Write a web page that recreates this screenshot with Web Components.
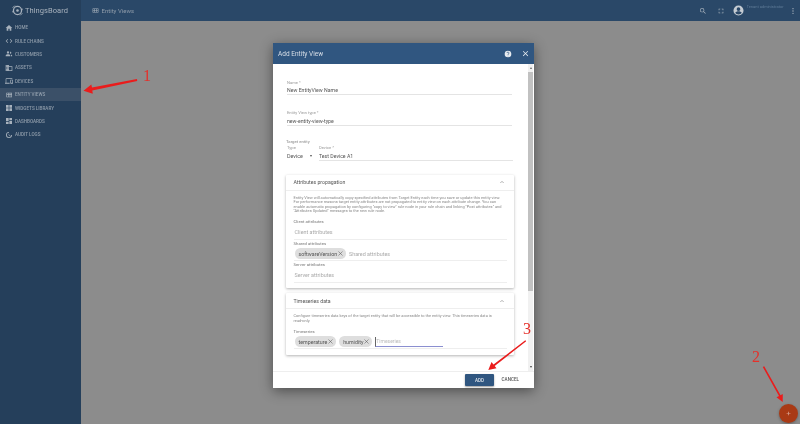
<!DOCTYPE html>
<html><head><meta charset="utf-8">
<style>
html,body{margin:0;height:100%;overflow:hidden;font-family:Roboto,"Liberation Sans",sans-serif;}
</style></head><body>
<tb-app></tb-app>
<template id="t-app"><style>
:host{display:grid;grid-template-columns:81px 1fr;grid-template-rows:21px 1fr;width:800px;height:424px;position:relative;background:#8c8c8c;overflow:hidden;filter:blur(.3px)}
tb-sidebar{grid-row:1/3}
</style>
<tb-sidebar></tb-sidebar><tb-topbar></tb-topbar><main></main>
<tb-dialog></tb-dialog><tb-fab></tb-fab><tb-notes></tb-notes></template>

<template id="t-side"><style>
:host{display:flex;flex-direction:column;background:#253f5b;color:#8f9caa;font-size:4.600px;font-weight:500}
.logo{height:21px;display:flex;align-items:center;gap:1px;padding-left:11px;font-size:7.500px;font-weight:400;color:#a8b2bd;letter-spacing:.05px}
.logo svg{width:13px;height:13px}
</style>
<div class="logo"><svg viewBox="0 0 24 24"><circle cx="12" cy="12" r="7.500" fill="none" stroke="#a8b2bd" stroke-width="2.400"/><path d="M8 16 16 8" stroke="#253f5b" stroke-width="2"/><path d="M3 7 7 3M17 21l4-4M2 14l2 1M20 9l2 1" stroke="#a8b2bd" stroke-width="1.600"/><circle cx="12" cy="12" r="2.400" fill="#a8b2bd"/></svg><span>ThingsBoard</span></div>
<tb-nav icon="M10 20v-6h4v6h5v-8h3L12 3 2 12h3v8z">HOME</tb-nav>
<tb-nav icon="M9.400 16.600 4.800 12l4.600-4.600L8 6l-6 6 6 6zM14.600 16.600l4.600-4.600-4.600-4.600L16 6l6 6-6 6z">RULE CHAINS</tb-nav>
<tb-nav icon="M9 11a3.500 3.500 0 1 0 0-7 3.500 3.500 0 0 0 0 7zM2 19v-2c0-2.500 4.500-4 7-4s7 1.500 7 4v2zM16 11a3 3 0 0 0 0-6c-.5 0-1 .1-1.400.3a5 5 0 0 1 0 5.400c.4.200.9.300 1.400.300zM18 13.300c1.500.8 3.500 1.800 3.500 3.700v2H18z">CUSTOMERS</tb-nav>
<tb-nav icon="M12 7V3H2v18h20V7zM6 19H4v-2h2zm0-4H4v-2h2zm0-4H4V9h2zm0-4H4V5h2zm4 12H8v-2h2zm0-4H8v-2h2zm0-4H8V9h2zm0-4H8V5h2zm10 12h-8V9h8z">ASSETS</tb-nav>
<tb-nav icon="M4 6h18V4H4c-1.100 0-2 .9-2 2v11H0v3h14v-3H4zm19 2h-6c-.6 0-1 .4-1 1v10c0 .6.400 1 1 1h6c.6 0 1-.4 1-1V9c0-.6-.4-1-1-1zm-1 9h-4v-7h4z">DEVICES</tb-nav>
<tb-nav active icon="M4 5h17v14H4zM6 7v3h3V7zm5 0v3h3V7zm5 0v3h3V7zM6 12v5h3v-5zm5 0v5h3v-5zm5 0v5h3v-5z">ENTITY VIEWS</tb-nav>
<tb-nav icon="M3 3h8v8H3zM13 3h8v8h-8zM3 13h8v8H3zM13 13h8v8h-8z">WIDGETS LIBRARY</tb-nav>
<tb-nav icon="M3 13h8V3H3zm0 8h8v-6H3zm10 0h8V11h-8zm0-18v6h8V3z">DASHBOARDS</tb-nav>
<tb-nav icon="M12 3a9 9 0 1 0 9 9h-2.500A6.500 6.500 0 1 1 12 5.500zM11 8v5l4.300 2.500.8-1.300-3.600-2.100V8z">AUDIT LOGS</tb-nav></template>

<template id="t-nav"><style>
:host{display:flex;align-items:center;height:13.400px;padding-left:4.500px;gap:2.500px;white-space:nowrap}
:host([active]){background:#3b5068}
svg{width:8px;height:8px;fill:#a8b2bd;flex:none}
</style><svg viewBox="0 0 24 24"><path></path></svg><slot></slot></template>

<template id="t-top"><style>
:host{display:flex;align-items:center;background:#2a4868;color:#8f9caa;font-size:6px;padding:0 3px 0 11px}
.t{display:flex;align-items:center;gap:2.500px}
.t svg{width:7px;height:7px;fill:#a8b2bd}
.sp{flex:1}
svg.i{width:8px;height:8px;fill:#a8b2bd}
.av{width:11px;height:11px;margin:0 3px 0 7.500px;fill:#c5ccd3}
.user{font-size:4px;color:#5f7b97;width:42.500px;margin-top:-8px;white-space:nowrap;overflow:hidden}
.dots{width:8px;height:8px;fill:#a8b2bd}
</style>
<div class="t"><svg viewBox="0 0 24 24"><path d="M2 5h20v14H2zM4 7v3h4V7zm6 0v3h4V7zm6 0v3h4V7zM4 12v5h4v-5zm6 0v5h4v-5zm6 0v5h4v-5z"/></svg><span>Entity Views</span></div><div class="sp"></div>
<svg class="i" viewBox="0 0 24 24" style="margin-right:10px"><path d="M15.500 14h-.79l-.28-.27A6.470 6.470 0 0 0 16 9.500 6.500 6.500 0 1 0 9.500 16c1.610 0 3.090-.59 4.230-1.570l.27.280v.79l5 4.990L20.490 19l-4.990-5zm-6 0C7.010 14 5 11.990 5 9.500S7.010 5 9.500 5 14 7.010 14 9.500 11.990 14 9.500 14z"/></svg>
<svg class="i" viewBox="0 0 24 24"><path d="M5 5h5v2H7v3H5zM14 5h5v5h-2V7h-3zM5 14h2v3h3v2H5zM17 14h2v5h-5v-2h3z"/></svg>
<svg class="av" viewBox="0 0 24 24"><path d="M12 1a11 11 0 1 0 0 22 11 11 0 0 0 0-22zm0 4a4 4 0 1 1 0 8 4 4 0 0 1 0-8zm0 15.500c-3 0-5.500-1.400-7-3.600 0-2.300 4.700-3.500 7-3.500s7 1.200 7 3.500c-1.500 2.200-4 3.600-7 3.600z"/></svg>
<span class="user">Tenant administrator</span>
<svg class="dots" viewBox="0 0 24 24"><circle cx="12" cy="5" r="2"/><circle cx="12" cy="12" r="2"/><circle cx="12" cy="19" r="2"/></svg></template>

<template id="t-dlg"><style>
:host{position:absolute;left:273px;top:43px;width:261px;height:345px;background:#fff;display:flex;flex-direction:column;box-shadow:0 3px 12px rgba(0,0,0,.45);color:#444}
header{height:21px;flex:none;background:#305680;color:#d8dfe7;display:flex;align-items:center;padding:0 4.500px 0 5px;font-size:6.500px}
header span{flex:1}
header svg{fill:#e8ecf0}
.body{flex:1;min-height:0;display:flex}
.scroll{flex:1;min-width:0;overflow:hidden;padding:16px 14.500px 0 13px;box-sizing:border-box}
.bar{width:5px;margin-right:1px;flex:none;background:#f1f1f1;display:flex;flex-direction:column;align-items:center;justify-content:space-between;position:relative}
.arrow{width:0;height:0;border-left:1.500px solid transparent;border-right:1.500px solid transparent;margin:3px 0}
.up{border-bottom:2px solid #666}.down{border-top:2px solid #444}
.bar b{position:absolute;left:0;right:0;top:8px;height:219px;background:#c1c1c1}
footer{height:17px;flex:none;display:flex;align-items:flex-start;justify-content:flex-end;border-top:1px solid #eee;box-sizing:border-box;gap:7.500px;padding:2px 15px 0 0;font-size:4.600px;font-weight:500;background:#fff;position:relative}
.add{width:29px;height:12px;background:#305680;color:#dfe5eb;display:flex;align-items:center;justify-content:center;border-radius:1px;box-shadow:0 1px 2px rgba(0,0,0,.4)}
.cancel{color:#555;height:12px;line-height:12px}
.target{display:flex}
.t-lab{font-size:4.300px;color:#888;margin:12.700px 0 0 0;line-height:6px}
.type{width:32px;margin-left:1px;flex:none;box-sizing:border-box;font-size:5.400px;color:#555;line-height:8px}
.type small{display:block;font-size:4.200px;color:#999;line-height:6px}
.type em{font-style:normal;display:flex;width:25px;justify-content:space-between;margin-top:1px}
.type em span{font-size:4px}
.dates{display:flex;margin:14.500px 0 0 3px;font-size:6px;color:#777;gap:0}
.dates span{width:74px;white-space:nowrap}
</style>
<header><span>Add Entity View</span>
<svg viewBox="0 0 24 24" style="width:8px;height:8px;margin-right:8.800px"><path d="M12 2a10 10 0 1 0 0 20 10 10 0 0 0 0-20zm1 17h-2v-2h2zm2-7.700-.9.900c-.7.700-1.100 1.300-1.100 2.800h-2v-.5c0-1.100.400-2.100 1.100-2.800l1.300-1.300a2 2 0 1 0-3.400-1.400H8a4 4 0 0 1 8 0c0 .9-.4 1.700-1 2.300z"/></svg>
<svg viewBox="0 0 24 24" style="width:9px;height:9px"><path d="M19 6.400 17.600 5 12 10.600 6.400 5 5 6.400 10.600 12 5 17.600 6.400 19l5.600-5.600 5.600 5.600 1.400-1.400-5.600-5.600z"/></svg></header>
<div class="body"><div class="scroll">
<tb-field label="Name *" value="New EntityView Name" style="margin:0 2px 0 1px"></tb-field>
<tb-field label="Entity View type *" value="new-entity-view-type" style="margin:15px 2px 0 1px;--gap:1px"></tb-field>
<div class="t-lab">Target entity</div>
<div class="target"><div class="type"><small>Type</small><em>Device <span>▾</span></em></div>
<tb-field label="Device *" value="Test Device A1" style="flex:1;--gap:1px;margin-right:1px"></tb-field></div>
<tb-panel title="Attributes propagation" style="margin-top:14px"><p>Entity View will automatically copy specified attributes from Target Entity each time you save or update this entity view. For performance reasons target entity attributes are not propagated to entity view on each attribute change. You can enable automatic propagation by configuring "copy to view" rule node in your rule chain and linking "Post attributes" and "Attributes Updated" messages to the new rule node.</p>
<tb-chips label="Client attributes" ph="Client attributes"></tb-chips>
<tb-chips label="Shared attributes" ph="Shared attributes"><tb-chip>softwareVersion</tb-chip></tb-chips>
<tb-chips label="Server attributes" ph="Server attributes"></tb-chips></tb-panel>
<tb-panel title="Timeseries data" style="margin-top:5.600px;--pb:6px"><p>Configure timeseries data keys of the target entity that will be accessible to the entity view. This timeseries data is read-only.</p>
<tb-chips label="Timeseries" ph="Timeseries" focus><tb-chip>temperature</tb-chip><tb-chip>humidity</tb-chip></tb-chips></tb-panel>
<div class="dates"><span>▦ Start date</span><span>◷ End date</span></div>
</div><div class="bar"><i class="arrow up"></i><b></b><i class="arrow down"></i></div></div>
<footer><div class="add">ADD</div><div class="cancel">CANCEL</div></footer></template>

<template id="t-field"><style>
:host{display:block;color:#444}
.l{font-size:4.100px;color:#999;line-height:6px}
.v{font-size:5.200px;line-height:8px;height:8px;margin-top:var(--gap,0);border-bottom:1px solid #e4e4e4;color:#555}
</style><div class="l"></div><div class="v"></div></template>

<template id="t-panel"><style>
:host{display:block;background:#fff;box-shadow:0 1px 3px rgba(0,0,0,.3);border-radius:1px}
.h{height:15px;display:flex;align-items:center;justify-content:space-between;padding:0 8px 0 7.500px;font-size:5.200px;color:#555;border-bottom:1px solid #eee}
.h svg{width:8px;height:8px;fill:none;stroke:#888;stroke-width:2}
.c{padding:5px 7px var(--pb,4.600px) 7.500px}
::slotted(p){margin:0 0 4.500px;font-size:3.950px;line-height:4.450px;color:#888;padding-right:5px}
</style><div class="h"><span></span><svg viewBox="0 0 24 24"><path d="M7 15l5-5 5 5"/></svg></div><div class="c"><slot></slot></div></template>

<template id="t-chips"><style>
:host{display:block}
.l{font-size:4.300px;color:#777;line-height:7px}
.r{display:flex;align-items:center;gap:3.400px;height:13.700px;border-bottom:1px solid #eee;padding-left:1px}
.p{font-size:5.400px;color:#aaa}
.p.f{border-left:1px solid #666;border-bottom:1px solid #8b8fd0;align-self:flex-end;width:67px;height:9px;line-height:9px;margin-bottom:1.500px;color:#bbb;font-size:5px}
</style><div class="l"></div><div class="r"><slot></slot><span class="p"></span></div></template>

<template id="t-chip"><style>
:host{display:inline-flex;align-items:center;height:10.500px;border-radius:5.250px;background:#dedede;color:#555;font-size:5.300px;padding:0 1.500px 0 4px;white-space:nowrap}
svg{width:7px;height:7px;stroke:#555;stroke-width:1.800;fill:none}
</style><slot></slot><svg viewBox="0 0 24 24"><path d="M5 5l14 14M19 5 5 19"/></svg></template>

<template id="t-fab"><style>
:host{position:absolute;left:779px;top:404px;width:19px;height:19px;border-radius:50%;background:#a93a15;color:#d8a090;display:flex;align-items:center;justify-content:center;font-size:8px;box-shadow:0 1px 3px rgba(0,0,0,.3)}
</style>+</template>

<template id="t-notes"><style>
:host{position:absolute;inset:0;pointer-events:none}
svg{width:800px;height:424px;display:block}
text{font-family:"Liberation Serif",serif;fill:#e5302a;font-size:16px}
</style><svg viewBox="0 0 800 424">
<path d="M137 79 92 87.500 91.300 84.500 83.500 90.800 92.800 93.800 92.300 90.500 137.200 81z" fill="#ea1c1c"/>
<text x="143" y="81">1</text>
<path d="M525.300 340.200 493.500 364.500 491.500 362 488.300 370 496.500 368.300 494.700 366 526.200 341.300z" fill="#ea1c1c"/>
<text x="523" y="334">3</text>
<path d="M762.800 367 779 396 776.500 397.300 782.700 402 782.800 394 780.500 395.200 764.200 366.200z" fill="#ea1c1c"/>
<text x="752" y="362">2</text>
</svg></template>
<script>
function mk(tag,tid,init){customElements.define(tag,class extends HTMLElement{constructor(){super();const s=this.attachShadow({mode:'open'});s.appendChild(document.getElementById(tid).content.cloneNode(true));}connectedCallback(){init&&init(this,this.shadowRoot);}});}
mk('tb-sidebar','t-side');
mk('tb-nav','t-nav',(h,s)=>s.querySelector('path').setAttribute('d',h.getAttribute('icon')));
mk('tb-topbar','t-top');
mk('tb-dialog','t-dlg');
mk('tb-field','t-field',(h,s)=>{s.querySelector('.l').textContent=h.getAttribute('label');s.querySelector('.v').textContent=h.getAttribute('value');});
mk('tb-panel','t-panel',(h,s)=>{s.querySelector('.h span').textContent=h.getAttribute('title');});
mk('tb-chips','t-chips',(h,s)=>{s.querySelector('.l').textContent=h.getAttribute('label');const p=s.querySelector('.p');p.textContent=h.getAttribute('ph');if(h.hasAttribute('focus'))p.classList.add('f');});
mk('tb-chip','t-chip');
mk('tb-fab','t-fab');
mk('tb-notes','t-notes');
mk('tb-app','t-app');
</script>
</body></html>
